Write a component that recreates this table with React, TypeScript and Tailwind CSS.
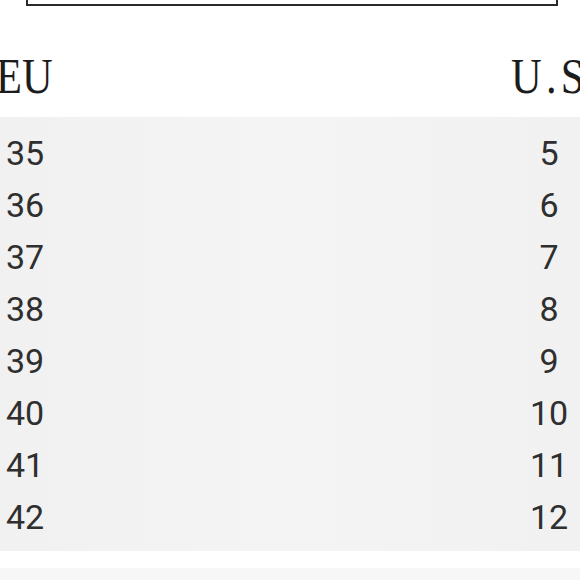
import React from "react";

const rows: [string, string][] = [
  ["35", "5"],
  ["36", "6"],
  ["37", "7"],
  ["38", "8"],
  ["39", "9"],
  ["40", "10"],
  ["41", "11"],
  ["42", "12"],
];

export default function App() {
  return (
    <div className="w-[580px] h-[580px] overflow-hidden bg-white flex flex-col">
      {/* top framed box (mostly cropped) */}
      <div className="ml-[26px] w-[532px] h-[46px] mt-[-40px] border-2 border-[#2a2a2a] shrink-0" />

      {/* header */}
      <div
        className="flex h-[111px] shrink-0 pt-[45px] whitespace-nowrap text-[#1c1c1c] text-[50px] leading-none"
        style={{ fontFamily: '"Liberation Serif", serif' }}
      >
        <div className="w-[511px] shrink-0">
          <span className="inline-block origin-left scale-x-[0.85] ml-[-4px]">EU</span>
        </div>
        <div className="shrink-0">
          <span className="inline-block origin-left scale-x-[0.85] tracking-[5px]">U.S</span>
        </div>
      </div>

      {/* table */}
      <div
        className="h-[434px] shrink-0 bg-gradient-to-r from-[#f1f1f1] via-[#f4f4f4] to-[#f1f1f1] pt-[10px] text-[#2f2f2f] text-[34px]"
        style={{ fontFamily: "Roboto, sans-serif" }}
      >
        {rows.map(([eu, us]) => (
          <div key={eu} className="flex h-[52px] leading-[52px] items-center">
            <div className="pl-[6px]">{eu}</div>
            <div className="ml-auto mr-[9px] w-[44px] text-center">{us}</div>
          </div>
        ))}
      </div>

      <div className="h-[17px] shrink-0 bg-white" />
      <div className="flex-1 bg-[#f7f7f7]" />
    </div>
  );
}
